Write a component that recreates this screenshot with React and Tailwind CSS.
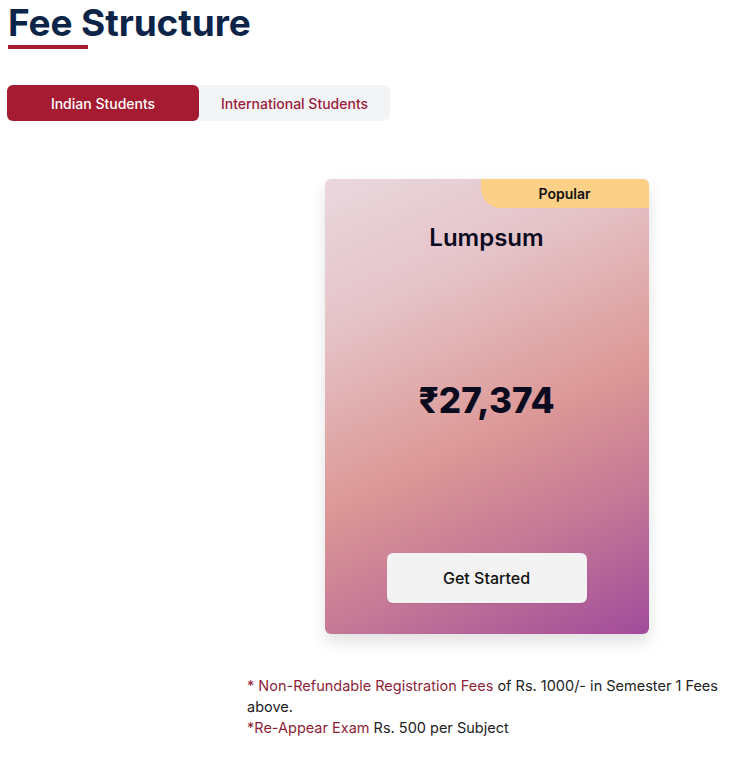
export default function App() {
  return (
    <div className="w-[736px] min-h-[764px] bg-white font-['Inter',sans-serif]">
      <div className="pl-[8px] pt-[4px]">
        <h1 className="text-[37px] leading-[38px] font-bold text-[#0b2447] tracking-[-0.1px]">Fee Structure</h1>
        <div className="mt-[3px] w-[80px] h-[4px] bg-[#a51c30]"></div>
      </div>
      <div className="ml-[7px] mt-[36px] flex w-[383px] h-[36px] rounded-[6px] bg-[#f3f4f6]">
        <button className="w-[192px] h-full rounded-[6px] bg-[#a51b32] text-white text-[14px] font-medium">Indian Students</button>
        <button className="flex-1 h-full text-[#9b1c3a] text-[14px] font-medium">International Students</button>
      </div>
      <div className="ml-[246px] w-[481px] mt-[58px]">
        <div className="mx-auto relative w-[324px] h-[455px] rounded-[6px] overflow-hidden shadow-[0_8px_16px_rgba(0,0,0,0.12)] bg-[linear-gradient(155deg,#e9d8de_0%,#e5c3c8_25%,#dc9896_55%,#c57996_75%,#a24b9b_100%)] flex flex-col items-center">
          <div className="absolute top-0 right-0 w-[168px] h-[29px] bg-[#fdd087] rounded-bl-[20px] flex items-center justify-center text-[14px] font-semibold text-[#111]">Popular</div>
          <div className="mt-[44px] text-[24px] leading-[30px] font-semibold text-[#0b0b1f]">Lumpsum</div>
          <div className="mt-[127px] text-[35px] leading-[40px] font-extrabold text-[#0b0b1f]">₹27,374</div>
          <button className="mt-[133px] w-[200px] h-[50px] rounded-[6px] bg-[#f3f3f3] text-[16px] font-medium text-[#111] shadow-[0_1px_2px_rgba(0,0,0,0.08)]">Get Started</button>
        </div>
        <div className="mt-[41px] ml-[1px] text-[14.5px] leading-[21px] text-[#222]">
          <p><span className="text-[#8e1f3a]">* Non-Refundable Registration Fees</span> of Rs. 1000/- in Semester 1 Fees above.</p>
          <p><span className="text-[#8e1f3a]">*Re-Appear Exam</span> Rs. 500 per Subject</p>
        </div>
      </div>
    </div>
  );
}
